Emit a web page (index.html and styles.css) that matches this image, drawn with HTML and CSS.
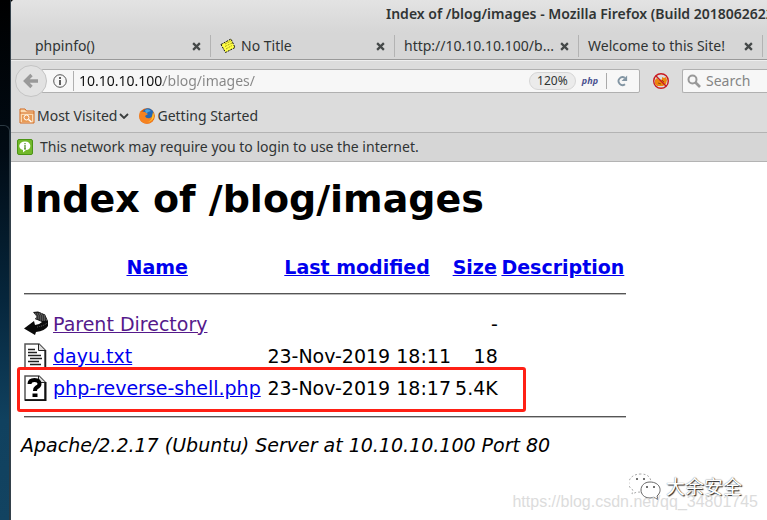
FILE: index.html
```html
<!DOCTYPE html>
<html lang="en">
<head>
<meta charset="utf-8">
<title>Index of /blog/images</title>
<link rel="stylesheet" href="styles.css">
</head>
<body>
<div class="desktop">
  <div class="wallpaper"></div>
  <div class="window">
    <header class="titlebar">Index of /blog/images - Mozilla Firefox (Build 2018062622</header>

    <nav class="tabs" aria-label="Tabs">
      <div class="tab tab-first"><span class="tab-label">phpinfo()</span><button class="close" aria-label="Close phpinfo()"><svg viewBox="0 0 8 8"><path d="M1 1l6 6M7 1L1 7"/></svg></button></div>
      <div class="tab"><svg class="note" viewBox="0 0 16 16"><path d="M1 6.500L11 1l4 8.500L5.500 14.500z" fill="#ff4" stroke="#111" stroke-dasharray="2 1"/><path d="M5 6l6-3M5 8.500l7-3.500M6 11l6-3.500" stroke="#a89c1c" stroke-dasharray="2 1" fill="none"/></svg><span class="tab-label">No Title</span><button class="close" aria-label="Close No Title"><svg viewBox="0 0 8 8"><path d="M1 1l6 6M7 1L1 7"/></svg></button></div>
      <div class="tab"><span class="tab-label">http://10.10.10.100/b...</span><button class="close" aria-label="Close page"><svg viewBox="0 0 8 8"><path d="M1 1l6 6M7 1L1 7"/></svg></button></div>
      <div class="tab"><span class="tab-label">Welcome to this Site!</span><button class="close" aria-label="Close Welcome"><svg viewBox="0 0 8 8"><path d="M1 1l6 6M7 1L1 7"/></svg></button></div>
    </nav>

    <div class="toolbar">
      <button class="back" aria-label="Back"><svg viewBox="0 0 16 16"><path d="M15 8H3M8.500 2L2.500 8l6 6" fill="none" stroke="#999" stroke-width="3.400"/></svg></button>
      <div class="urlbar">
        <svg class="info" viewBox="0 0 14 14"><circle cx="7" cy="7" r="6.300" fill="none" stroke="#555"/><path d="M7 6v5M7 3v2" stroke="#444" stroke-width="1.700"/></svg>
        <input class="url" type="text" aria-label="Address" value="10.10.10.100/blog/images/">
        <button class="zoom">120%</button>
        <span class="php">php</span>
        <button class="reload" aria-label="Reload"><svg viewBox="0 0 14 14"><path d="M9.500 3.500A4.300 4.300 0 1 0 9.700 10.500" fill="none" stroke="#8295a3" stroke-width="2"/><path d="M12 1v6H6z" fill="#8295a3"/></svg></button>
      </div>
      <button class="addon" aria-label="Proxy disabled"><svg viewBox="0 0 18 18"><path d="M3 8l2-2 2 2 3-.500V5l2 1 2-1 1 3-1 4-3 2H5l-2-2z" fill="#ed850d"/><path d="M10 8l2 2M6 11l3 1" stroke="#9a4a08"/><circle cx="9" cy="9" r="7.300" fill="none" stroke="#c91a20" stroke-width="1.400"/><path d="M3.800 3.800l10.400 10.400" stroke="#c91a20" stroke-width="1.400"/></svg></button>
      <div class="searchbar">
        <svg class="glass" viewBox="0 0 14 14"><circle cx="5.500" cy="5.500" r="4" fill="none" stroke="#999" stroke-width="2"/><path d="M8.500 8.500L13 13" stroke="#999" stroke-width="2.600"/></svg>
        <input class="search" type="text" aria-label="Search" placeholder="Search">
      </div>
    </div>

    <div class="bookmarks">
      <button class="bookmark"><svg class="folder" viewBox="0 0 16 16"><path d="M1 15V1h5l1.500 2H15v12z" fill="#fbd9ae" stroke="#d2691e"/><path d="M1 5h14" stroke="#d2691e"/><path d="M3 7h10v7H3z" fill="#e89a55"/><circle cx="7.500" cy="9.500" r="2.500" fill="#e89a55" stroke="#fff"/><path d="M9.500 11.500l3 2.500" stroke="#fff" stroke-width="1.500"/></svg>Most Visited<svg class="chevron" viewBox="0 0 10 6"><path d="M1 1l4 4 4-4" fill="none" stroke="#3a3d3d" stroke-width="1.800"/></svg></button>
      <a class="bookmark" href="#"><svg class="fox" viewBox="0 0 16 16"><circle cx="8" cy="8" r="7.800" fill="#e66000"/><circle cx="9" cy="6" r="5.700" fill="#2468b5"/><path d="M6 2q3-2 6 1l-3 1-2 2z" fill="#4ba4df"/><path d="M1 3l2 1q3-1 4 1l2 1-3 2q1 3 5 2 3-1 3-6 2 3 1 6-2 6-8 5.500Q0 15 .300 8z" fill="#f58220"/><path d="M14 4q2 5-1 8-2 2-5 2 4-1 5-4z" fill="#ffcb2e"/></svg>Getting Started</a>
    </div>

    <div class="notice"><svg class="bubble" viewBox="0 0 16 16"><rect x=".5" y=".5" width="15" height="15" rx="1.500" fill="#72b82a" stroke="#4b9415"/><path d="M8 2.500c7 0 7 8.500 1 8.500l-3 2.500V11C.500 10 1 2.500 8 2.500z" fill="#fff"/><path d="M8 6v4M8 4v1.300M7 10h2" stroke="#4b8a1d" stroke-width="1.200"/></svg><span>This network may require you to login to use the internet.</span></div>

    <main class="page">
      <h1>Index of /blog/images</h1>
      <div class="listing">
        <table>
          <colgroup><col class="c-icon"><col class="c-name"><col class="c-date"><col class="c-size"><col class="c-desc"></colgroup>
          <tr><th></th><th><a href="#">Name</a></th><th><a href="#">Last modified</a></th><th><a href="#">Size</a></th><th><a href="#">Description</a></th></tr>
          <tr class="rule"><td colspan="5"><hr></td></tr>
          <tr><td class="icon"><svg viewBox="0 0 24 26"><path d="M9 1l5-.500 7 3L24 10v5q-3 5-12 6l-1 3L0 17.500 10 10l1 4q4 0 7-3l-7-3 2-2z" fill="#0a0a0a"/><path d="M10 1.500h6l5 2.500 2 5-4 1-8-2 2-3z" fill="#333"/><path d="M11 3h8M12 5h9M12 7h10M16 9h7" stroke="#777" stroke-dasharray="1 1"/><path d="M13 16q7-1 10-4" stroke="#666" stroke-dasharray="1 1" fill="none"/></svg></td><td><a class="visited" href="#">Parent Directory</a></td><td></td><td class="num">-</td><td></td></tr>
          <tr><td class="icon"><svg viewBox="0 0 24 26"><path d="M1 1h14l6 6v18H1z" fill="#fff" stroke="#555" stroke-width="1.500"/><path d="M21.500 7v18.300H1" fill="none" stroke="#222" stroke-width="1.500"/><path d="M14.500 1v6.500H21" fill="#ddd" stroke="#222"/><path d="M4 6.500h7M4 9.500h9M4 12.500h13M6 15.500h12M4 18.500h11M6 21.500h11" stroke="#222" stroke-width="1.400"/></svg></td><td><a href="#">dayu.txt</a></td><td class="num date">23-Nov-2019 18:11</td><td class="num">18</td><td></td></tr>
          <tr><td class="icon"><svg viewBox="0 0 24 26"><path d="M1 1h14l6 6v18H1z" fill="#fff" stroke="#555" stroke-width="1.500"/><path d="M21.500 7v18.300H1" fill="none" stroke="#111" stroke-width="2"/><path d="M14.500 1v6.500H21" fill="#ddd" stroke="#222"/><path d="M5.500 9q0-4 5-4t5 4q0 2-3 3.500-1.500 1-1.500 3.500" fill="none" stroke="#000" stroke-width="4"/><path d="M8.500 18.500h5v3.500h-5z"/></svg></td><td><a href="#">php-reverse-shell.php</a></td><td class="num date">23-Nov-2019 18:17</td><td class="num">5.4K</td><td></td></tr>
          <tr class="rule rule-end"><td colspan="5"><hr></td></tr>
        </table>
        <div class="highlight"></div>
      </div>
      <address>Apache/2.2.17 (Ubuntu) Server at 10.10.10.100 Port 80</address>
    </main>
  </div>

  <div class="brand"><svg viewBox="0 0 32 27"><g fill="#fff" stroke="#aaa" stroke-width="1"><path d="M12 1C-2 1-3 14 4 17l-1 4 5-2c15 2 20-18 4-18z" stroke-dasharray="2 2"/><path d="M21 9c-12 0-12 16 0 16l4-.500 4 2-1-3.500C34 18 31 9 21 9z" stroke="#666"/></g><path d="M7 6h2M14 6h2M17 14h2M24 14h2" stroke="#444" stroke-width="1.500"/></svg><span>大余安全</span></div>
  <div class="source">https://blog.csdn.net/qq_34801745</div>
</div>
</body>
</html>
```
FILE: styles.css
```css
* { box-sizing: border-box; }

body {
  margin: 0;
  color: #303434;
  font: 14px/20px "Noto Sans", "Open Sans", sans-serif;
}

svg { display: block; flex: none; }

button {
  padding: 0;
  border: 0;
  background: none;
  color: inherit;
  font: inherit;
}

input {
  min-width: 0;
  padding: 0;
  border: 0;
  outline: 0;
  background: none;
  font: inherit;
}

.desktop {
  position: relative;
  display: flex;
  min-height: 100vh;
  overflow: hidden;
  background: #000;
}

.wallpaper {
  flex: none;
  width: 11px;
  background: linear-gradient(#000 0, #010b14 150px, #06263c 300px, #10415f 420px, #124361);
  border-right: 1px solid #34414b;
}

.wallpaper::before {
  content: "";
  display: block;
  height: 100%;
  margin-top: 125px;
  border: solid #2b3942;
  border-width: 1px 1px 0 0;
  border-radius: 0 6px 0 0;
}

.window {
  flex: 1;
  min-width: 0;
  overflow: hidden;
  border-radius: 4px 0 0 0;
  background: #fff;
}

.titlebar {
  height: 33px;
  padding: 4px 0 0 375px;
  background: linear-gradient(#e3e3e3, #d6d6d6);
  font-weight: 600;
  white-space: nowrap;
}

.tabs {
  display: flex;
  height: 27px;
  background: #d6d6d6;
  border-bottom: 1px solid #999;
}

.tab {
  position: relative;
  display: flex;
  flex: 0 0 184px;
  align-items: center;
  gap: 5px;
  padding: 0 10px 0 9px;
}

.tab-first {
  flex-basis: 200px;
  padding-left: 24px;
}

.tab::after {
  content: "";
  position: absolute;
  right: 0;
  top: 2px;
  bottom: 2px;
  border-right: 1px solid #b3b3b3;
}

.tab-label {
  flex: 1;
  white-space: nowrap;
}

.close svg {
  width: 9px;
  height: 9px;
  fill: none;
  stroke: #454949;
  stroke-width: 2;
}

.note { width: 16px; height: 16px; }

.toolbar {
  display: flex;
  align-items: center;
  height: 41px;
  padding-left: 4px;
  background: #dcdcdc;
  border-top: 1px solid #eee;
}

.back {
  z-index: 1;
  display: grid;
  flex: none;
  place-items: center;
  width: 32px;
  height: 32px;
  border: 1px solid #c4c4c4;
  border-radius: 50%;
  background: #e2e2e2;
}

.back svg { width: 16px; height: 16px; }

.urlbar,
.searchbar {
  display: flex;
  align-items: center;
  height: 24px;
  border: 1px solid #b0b0b0;
  border-radius: 2px;
  background: #f7f7f7;
}

.urlbar {
  flex: 1;
  min-width: 0;
  margin-left: -6px;
  padding-left: 11px;
}

.info { width: 14px; height: 14px; }

.url {
  flex: 1;
  margin-left: 6px;
  padding-left: 5px;
  border-left: 1px solid #b0b0b0;
  background: linear-gradient(90deg, #111 89px, #858585 89px) text;
  -webkit-text-fill-color: transparent;
  color: #111;
}

.zoom {
  width: 47px;
  height: 18px;
  border: 1px solid #d6d6d6;
  border-radius: 9px;
  background: #ebebeb;
  font-size: 12px;
  line-height: 16px;
}

.php {
  margin: 0 8px 0 6px;
  color: #4b5290;
  font-size: 9px;
  font-style: italic;
  font-weight: 700;
}

.reload {
  height: 16px;
  padding: 0 10px 0 9px;
  border-left: 1px solid #aaa;
}

.reload svg { width: 13px; height: 14px; }

.addon {
  margin: 0 12px;
}

.addon svg { width: 18px; height: 18px; }

.searchbar {
  flex: 0 0 85px;
  gap: 5px;
  padding-left: 4px;
  border-right: 0;
  border-radius: 2px 0 0 2px;
}

.glass { width: 14px; height: 14px; }

.search { flex: 1; width: 50px; }

.search::placeholder { color: #858585; opacity: 1; }

.bookmarks {
  display: flex;
  gap: 10px;
  height: 32px;
  padding: 0 0 1px 8px;
  background: #dcdcdc;
  border-bottom: 1px solid #b3b3b3;
}

.bookmark {
  display: flex;
  align-items: center;
  gap: 2px;
  color: inherit;
  text-decoration: none;
  white-space: nowrap;
}

.folder,
.fox,
.bubble { width: 16px; height: 16px; }

.chevron { width: 10px; height: 6px; }

.notice {
  display: flex;
  align-items: center;
  gap: 7px;
  height: 29px;
  padding-left: 6px;
  background: #d6d6d6;
  border-bottom: 1px solid #b3b3b3;
}

.page {
  padding: 14px 10px;
  color: #000;
  font: 19px/24px "DejaVu Sans", sans-serif;
}

h1 {
  margin: 0 0 31px;
  font-size: 38px;
  line-height: 46px;
}

.listing {
  position: relative;
  width: 602px;
  margin-left: 3px;
}

table {
  width: 100%;
  border-collapse: collapse;
  table-layout: fixed;
}

.c-icon { width: 26px; }
.c-name { width: 214px; }
.c-date { width: 185px; }
.c-size { width: 50px; }
.c-desc { width: 126px; }

th,
td {
  height: 32px;
  padding: 0 2px 0 3px;
  text-align: left;
  white-space: nowrap;
}

th {
  height: 27px;
  padding: 0;
  text-align: center;
}

a { color: #00e; }

.visited { color: #551a8b; }

.icon { padding: 0; }

.icon svg { width: 24px; height: 26px; }

.num { text-align: right; }

.date { padding-right: 3px; }

.rule td {
  height: 28px;
  padding: 0;
}

.rule-end td { height: 26px; }

hr {
  height: 2px;
  margin: 0;
  border: 0;
  border-top: 1px solid #555;
  background: #bbb;
}

.highlight {
  position: absolute;
  top: 114px;
  left: -7px;
  width: 509px;
  height: 45px;
  border: 3px solid #ff2015;
  border-radius: 3px;
}

address { margin-top: 3px; }

.brand {
  position: absolute;
  right: 25px;
  bottom: 20px;
  display: flex;
  align-items: center;
  gap: 5px;
  color: #fff;
  font: 19px/28px "Noto Sans CJK SC", sans-serif;
  text-shadow: 1px 1px 1px #222, 0 0 1px #666;
}

.brand svg { width: 32px; height: 27px; }

.source {
  position: absolute;
  right: 9px;
  bottom: 8px;
  color: #dcdcdc;
  font: 16px/20px "Liberation Sans", sans-serif;
}
```
